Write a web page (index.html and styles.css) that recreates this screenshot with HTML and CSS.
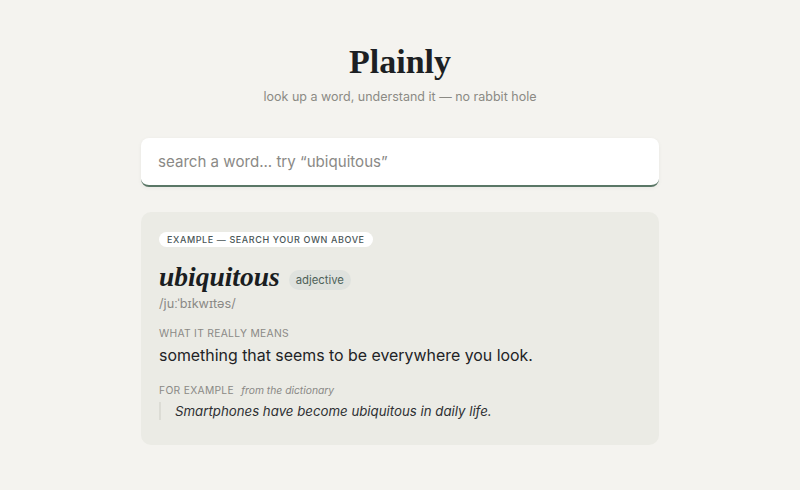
FILE: index.html
```html
<!DOCTYPE html>
<html lang="en">
<head>
<meta charset="utf-8">
<title>Plainly</title>
<link rel="stylesheet" href="styles.css">
</head>
<body>
<main class="page">
  <header class="head">
    <h1 class="brand">Plainly</h1>
    <p class="tagline">look up a word, understand it — no rabbit hole</p>
  </header>
  <div class="search">
    <input class="search-input" type="text" placeholder="search a word... try “ubiquitous”">
  </div>
  <section class="card">
    <span class="pill">Example — search your own above</span>
    <div class="word-row">
      <h2 class="word">ubiquitous</h2>
      <span class="pos">adjective</span>
    </div>
    <div class="phon">/juːˈbɪkwɪtəs/</div>
    <div class="label">What it really means</div>
    <p class="def">something that seems to be everywhere you look.</p>
    <div class="label ex-label">For example <span class="src">from the dictionary</span></div>
    <blockquote class="quote">Smartphones have become ubiquitous in daily life.</blockquote>
  </section>
</main>
</body>
</html>
```
FILE: styles.css
```css
* { box-sizing: border-box; }
html, body { margin: 0; padding: 0; }
body {
  background: #f4f3ef;
  font-family: Inter, "Noto Sans", sans-serif;
  color: #222;
}
.page {
  width: 518px;
  margin: 0 auto;
  padding-top: 40px;
}
.head {
  display: flex;
  flex-direction: column;
  align-items: center;
}
.brand {
  margin: 0;
  font-family: "Liberation Serif", serif;
  font-weight: 700;
  font-size: 34px;
  line-height: 44px;
  color: #1c1f23;
}
.tagline {
  margin: 4px 0 0;
  font-size: 12.5px;
  line-height: 18px;
  color: #8b8a84;
}
.search {
  margin-top: 32px;
}
.search-input {
  display: block;
  width: 100%;
  height: 49px;
  border: 0;
  border-bottom: 2px solid #5a7766;
  border-radius: 8px;
  background: #fff;
  padding: 0 17px;
  font-family: Inter, sans-serif;
  font-size: 15.1px;
  color: #222;
  box-shadow: 0 1px 4px rgba(0,0,0,0.05);
  outline: none;
}
.search-input::placeholder { color: #8a8986; }
.card {
  margin-top: 25px;
  background: #ebebe5;
  border-radius: 10px;
  padding: 20px 18px 0;
  height: 233px;
  display: flex;
  flex-direction: column;
  align-items: flex-start;
}
.pill {
  display: block;
  background: #fff;
  border-radius: 999px;
  padding: 0 8px;
  height: 15px;
  line-height: 15px;
  font-size: 9px;
  font-weight: 500;
  letter-spacing: 0.6px;
  text-transform: uppercase;
  color: #4a5657;
}
.word-row {
  display: flex;
  align-items: center;
  gap: 9px;
  margin-top: 14px;
}
.word {
  margin: 0;
  font-family: "Liberation Serif", serif;
  font-style: italic;
  font-weight: 700;
  font-size: 27.5px;
  line-height: 32px;
  color: #1a1d21;
}
.pos {
  display: block;
  background: #dfe2de;
  border-radius: 999px;
  padding: 0 7px;
  height: 20px;
  line-height: 20px;
  font-size: 11.3px;
  color: #4d6158;
  margin-top: 6px;
}
.phon {
  margin-top: 2px;
  font-size: 12.7px;
  line-height: 18px;
  color: #8a8985;
}
.label {
  margin-top: 13px;
  font-size: 10.3px;
  line-height: 14px;
  letter-spacing: 0.3px;
  text-transform: uppercase;
  color: #8a8985;
}
.def {
  margin: 5px 0 0;
  font-size: 15.9px;
  line-height: 22px;
  color: #222326;
}
.ex-label { margin-top: 16px; }
.src {
  text-transform: none;
  font-style: italic;
  letter-spacing: 0;
  margin-left: 4px;
}
.quote {
  margin: 5px 0 0;
  border-left: 2px solid #dcdcd5;
  padding: 0 0 0 14px;
  font-size: 13.25px;
  line-height: 18px;
  font-style: italic;
  color: #2e3033;
}
```
